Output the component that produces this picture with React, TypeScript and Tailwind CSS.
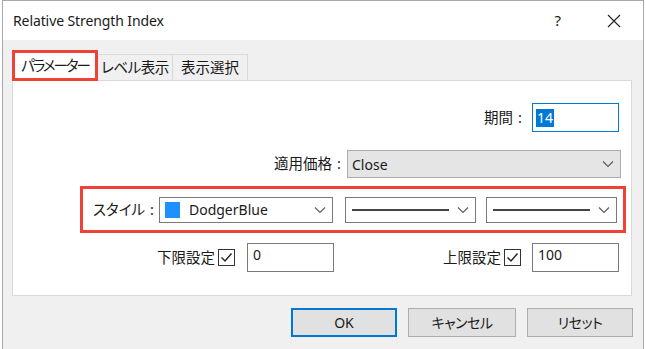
import React from "react"

const font = "font-['Noto_Sans','Noto_Sans_CJK_JP',sans-serif] [font-feature-settings:'palt']"

const Chevron = () => (
  <svg width="12" height="8" viewBox="0 0 12 8" className="shrink-0">
    <polyline points="1,1.5 6,6.5 11,1.5" fill="none" stroke="#606060" strokeWidth="1.2" />
  </svg>
)

const Check = () => (
  <div className="w-[17px] h-[17px] border border-[#333] bg-white flex items-center justify-center">
    <svg width="13" height="11" viewBox="0 0 13 11">
      <polyline points="1.5,5.5 5,9 11.5,1.5" fill="none" stroke="#222" strokeWidth="1.4" />
    </svg>
  </div>
)

const LineSelect = () => (
  <div className="w-[131px] h-[26px] border border-[#7a7a7a] bg-white flex items-center pl-[6px] pr-[6px] gap-[8px]">
    <div className="flex-1 h-[2px] bg-[#444]" />
    <Chevron />
  </div>
)

const Label = ({ text }: { text: string }) => (
  <span className="flex items-center">
    <span>{text}</span>
    <span className="ml-[5px]">:</span>
  </span>
)

export default function App() {
  return (
    <div className={`w-[646px] h-[349px] bg-white overflow-hidden text-[#1a1a1a] ${font}`}>
      <div className="ml-[2px] w-[642px] h-[360px] border border-[#a9a9a9] flex flex-col">
        {/* title bar */}
        <div className="h-[39px] bg-white flex items-center pl-[10px] shrink-0">
          <span className="text-[14px] tracking-[-0.1px]">Relative Strength Index</span>
          <span className="ml-auto text-[15px] mr-[46px]">?</span>
          <svg width="14" height="14" viewBox="0 0 14 14" className="mr-[22px]">
            <path d="M1 1 L13 13 M13 1 L1 13" stroke="#222" strokeWidth="1.1" />
          </svg>
        </div>

        <div className="flex-1 bg-[#f0f0f0] pl-[9px] pr-[10px] flex flex-col">
          {/* tabs */}
          <div className="flex items-end mt-[9px] h-[32px] relative z-10 text-[14.5px]">
            <div className="w-[86px] h-[31px] border-[3px] border-[#ef4136] bg-white flex items-center justify-center tracking-[-2px]">
              パラメーター
            </div>
            <div className="w-[75px] h-[27px] border border-[#d9d9d9] border-l-0 border-b-0 flex items-center justify-center tracking-[-0.5px]">
              レベル表示
            </div>
            <div className="w-[75px] h-[27px] border border-[#d9d9d9] border-l-0 border-b-0 flex items-center justify-center">
              表示選択
            </div>
          </div>

          {/* panel */}
          <div className="w-[620px] h-[216px] -mt-[1px] bg-white border border-[#d9d9d9] flex flex-col text-[14.5px]">
            <div className="flex items-center justify-end pr-[12px] mt-[22px]">
              <Label text="期間" />
              <div className="ml-[10px] w-[87px] h-[29px] border border-[#0078d7] bg-white flex items-center pl-[3px]">
                <span className="bg-[#0078d7] text-white px-[1px] leading-[18px] text-[14px]">14</span>
              </div>
            </div>

            <div className="flex items-center justify-end pr-[10px] mt-[18px]">
              <Label text="適用価格" />
              <div className="ml-[6px] w-[274px] h-[28px] border border-[#adadad] bg-[#e5e5e5] flex items-center pl-[4px] pr-[6px]">
                <span className="flex-1 text-[14px]">Close</span>
                <Chevron />
              </div>
            </div>

            <div className="ml-[67px] mt-[8px] w-[546px] h-[47px] border-[3px] border-[#ef4136] flex items-center pl-[10px]">
              <Label text="スタイル" />
              <div className="ml-[5px] w-[174px] h-[26px] border border-[#7a7a7a] bg-white flex items-center pl-[5px] pr-[6px]">
                <div className="w-[15px] h-[16px] bg-[#1e90ff]" />
                <span className="ml-[9px] flex-1 text-[14px]">DodgerBlue</span>
                <Chevron />
              </div>
              <div className="ml-[12px]">
                <LineSelect />
              </div>
              <div className="ml-[10px]">
                <LineSelect />
              </div>
            </div>

            <div className="flex items-center mt-[10px]">
              <div className="w-[321px] flex items-center justify-end">
                <span>下限設定</span>
                <div className="ml-[3px]">
                  <Check />
                </div>
                <div className="ml-[12px] w-[87px] h-[29px] border border-[#7a7a7a] bg-white pl-[5px] leading-[22px] text-[14px]">0</div>
              </div>
              <div className="flex-1 flex items-center justify-end pr-[12px]">
                <span>上限設定</span>
                <div className="ml-[3px]">
                  <Check />
                </div>
                <div className="ml-[11px] w-[87px] h-[29px] border border-[#7a7a7a] bg-white pl-[5px] leading-[22px] text-[14px]">100</div>
              </div>
            </div>
          </div>

          {/* buttons */}
          <div className="flex justify-end gap-[11px] mt-[12px] text-[14px]">
            <button className="w-[106px] h-[29px] border-2 border-[#0078d7] bg-[#e1e1e1]">OK</button>
            <button className="w-[108px] h-[29px] border border-[#adadad] bg-[#e1e1e1] tracking-[-0.5px]">キャンセル</button>
            <button className="w-[106px] h-[29px] border border-[#adadad] bg-[#e1e1e1] tracking-[-0.5px]">リセット</button>
          </div>
        </div>
      </div>
    </div>
  )
}
